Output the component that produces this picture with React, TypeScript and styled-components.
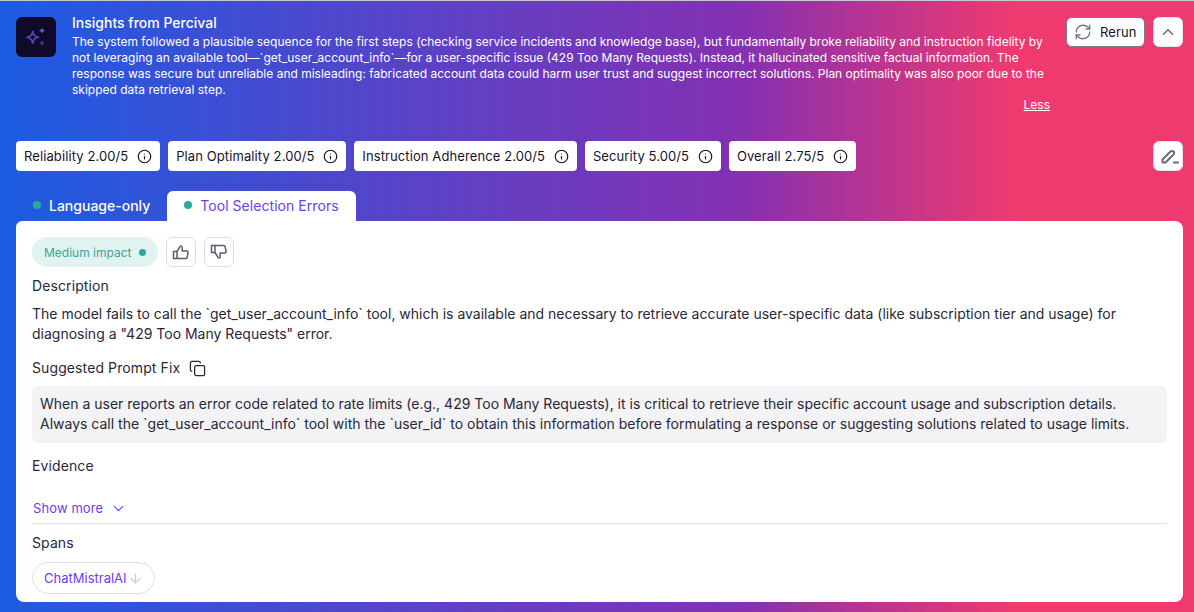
import React from 'react'
import styled, { createGlobalStyle } from 'styled-components'
import { RefreshCw, ChevronUp, ChevronDown, Info, Copy, ArrowDown } from 'lucide-react'

const GlobalStyle = createGlobalStyle`
  html, body { margin: 0; padding: 0; }
  body { font-family: Inter, "Noto Sans", sans-serif; color: #17132b; }
  * { box-sizing: border-box; }
`

const Page = styled.div`
  width: 1194px;
  height: 612px;
  overflow: hidden;
  padding: 16px 11px 10px 16px;
  border-top: 1px solid #c9c9d2;
  background: linear-gradient(90deg, #1b5ce2 0%, #5a42c6 35%, #8430b2 62%, #ef3a6f 85%, #ef3a6f 100%);
`

const Header = styled.div`
  display: flex;
  height: 124px;
`

const LogoBox = styled.div`
  width: 40px;
  height: 40px;
  flex: none;
  border-radius: 6px;
  background: #0f0a2a;
  display: flex;
  align-items: center;
  justify-content: center;
`

const HeaderText = styled.div`
  width: 978px;
  margin-left: 16px;
  color: #fff;
`

const Title = styled.div`
  font-size: 14px;
  line-height: 12px;
  font-weight: 500;
  margin-bottom: 5px;
`

const Summary = styled.div`
  font-size: 12px;
  line-height: 16px;
`

const LessLink = styled.div`
  font-size: 12px;
  line-height: 16px;
  text-decoration: underline;
  text-align: right;
  margin-top: -1px;
`

const HeaderActions = styled.div`
  margin-left: auto;
  display: flex;
  gap: 8px;
  align-items: flex-start;
`

const RerunButton = styled.button`
  width: 79px;
  height: 30px;
  padding: 0 7px;
  display: flex;
  align-items: center;
  gap: 8px;
  background: #fff;
  border: 1px solid #7f7a90;
  border-radius: 6px;
  font: 400 13px Inter, sans-serif;
  letter-spacing: 0.1px;
  color: #17132b;
`

const IconButton = styled.button`
  width: 30px;
  height: 30px;
  padding: 0;
  display: flex;
  align-items: center;
  justify-content: center;
  background: #fff;
  border: 1px solid #e2e1e8;
  border-radius: 6px;
`

const ScoreRow = styled.div`
  display: flex;
  gap: 8px;
`

const ScoreChip = styled.div`
  height: 30px;
  padding: 0 8px;
  display: flex;
  align-items: center;
  gap: 8.8px;
  background: #fff;
  border-radius: 4px;
  font-size: 13px;
  letter-spacing: 0.1px;
  white-space: nowrap;
`

const EditButton = styled(IconButton)`
  margin-left: auto;
`

const Tabs = styled.div`
  display: flex;
  margin-top: 20px;
  height: 30px;
`

const Tab = styled.div<{ $active?: boolean }>`
  display: flex;
  align-items: center;
  gap: 8px;
  height: 30px;
  padding: 0 17px 2px;
  font-size: 14px;
  font-weight: ${p => (p.$active ? 400 : 500)};
  letter-spacing: ${p => (p.$active ? '0.05px' : '0')};
  border-radius: 6px 6px 0 0;
  background: ${p => (p.$active ? '#fff' : 'transparent')};
  color: ${p => (p.$active ? '#6d3df0' : '#fff')};
`

const Dot = styled.span<{ $size?: number }>`
  width: ${p => p.$size ?? 8}px;
  height: ${p => p.$size ?? 8}px;
  border-radius: 50%;
  background: #2aab98;
  flex: none;
`

const Card = styled.div`
  height: 381px;
  background: #fff;
  border-radius: 6px 8px 8px 8px;
  padding: 16px;
  color: #2a2838;
`

const ImpactRow = styled.div`
  display: flex;
  gap: 8px;
  align-items: center;
`

const ImpactBadge = styled.div`
  width: 126px;
  height: 30px;
  padding: 0 12px;
  display: flex;
  align-items: center;
  justify-content: space-between;
  border-radius: 15px;
  background: #e0f3f0;
  color: #3da596;
  font-size: 12px;
`

const VoteButton = styled(IconButton)`
  border-color: #dedde4;
`

const SectionLabel = styled.div<{ $top: number }>`
  display: flex;
  align-items: center;
  gap: 9px;
  margin-top: ${p => p.$top}px;
  font-size: 14px;
  letter-spacing: 0.1px;
  line-height: 20px;
  color: #2a2838;
`

const BodyText = styled.p`
  margin: 8px 0 0;
  font-size: 14px;
  line-height: 20px;
`

const PromptBox = styled.div`
  margin-top: 8px;
  padding: 8px 8px 9px;
  border-radius: 6px;
  background: #f3f3f5;
  font-size: 14px;
  line-height: 20px;
`

const ShowMore = styled.div`
  display: flex;
  align-items: center;
  gap: 7px;
  margin-top: 22px;
  padding: 0 1px 5px;
  border-bottom: 1px solid #dfdfe3;
  color: #6d3df0;
  font-size: 13px;
  letter-spacing: 0.1px;
  line-height: 20px;
`

const SpanPill = styled.div`
  display: inline-flex;
  align-items: center;
  gap: 1px;
  height: 32px;
  margin-top: 9px;
  padding: 0 11px;
  border: 1px solid #dfdfe6;
  border-radius: 16px;
  color: #6d3df0;
  font-size: 13px;
`

const scores = [
  'Reliability 2.00/5',
  'Plan Optimality 2.00/5',
  'Instruction Adherence 2.00/5',
  'Security 5.00/5',
  'Overall 2.75/5',
]

const Sparkles = () => (
  <svg width="20" height="20" viewBox="0 0 20 20" fill="none">
    <path d="M6.7 4.3 C7.2 8 8.8 9.8 12.6 10.3 C8.8 10.8 7.2 12.6 6.7 16.3 C6.2 12.6 4.6 10.8 0.8 10.3 C4.6 9.8 6.2 8 6.7 4.3 Z" stroke="#5a45b8" strokeWidth="1.6" strokeLinejoin="round" />
    <path d="M16 .8 L17.1 2.6 L19 3.7 L17.1 4.8 L16 6.6 L14.9 4.8 L13 3.7 L14.9 2.6 Z" fill="#6a55c0" />
    <path d="M16 13.1 L17.1 14.9 L19 16 L17.1 17.1 L16 18.9 L14.9 17.1 L13 16 L14.9 14.9 Z" fill="#3f2d95" />
  </svg>
)

const EditIcon = () => (
  <svg width="24" height="24" viewBox="0 0 24 24" fill="none" stroke="#6d6880" strokeWidth="2" strokeLinecap="round" strokeLinejoin="round">
    <path d="M6.5 18.5v-3L14.5 7.5a2.1 2.1 0 0 1 3 3L9.5 18.5z" />
    <path d="M18 18.5h4" />
  </svg>
)

const Thumb = ({ down }: { down?: boolean }) => (
  <svg width="18" height="18" viewBox="0 0 18 18" fill="none" stroke="#5f5a70" strokeWidth="1.5" strokeLinejoin="round" transform={down ? 'scale(1 -1)' : undefined}>
    <path d="M1.5 8.5H5V15.5H1.5z" />
    <path d="M5 8.5L8 3.6a1.2 1.2 0 0 1 2.2 .7V8H15a1.1 1.1 0 0 1 1.1 1.3l-1 5.3a1.1 1.1 0 0 1-1.1 .9H5" />
  </svg>
)

export default function App() {
  return (
    <Page>
      <GlobalStyle />
      <Header>
        <LogoBox>
          <Sparkles />
        </LogoBox>
        <HeaderText>
          <Title>Insights from Percival</Title>
          <Summary>
            The system followed a plausible sequence for the first steps (checking service incidents and knowledge base), but fundamentally broke reliability and instruction fidelity by not leveraging an available tool—`get_user_account_info`—for a user-specific issue (429 Too Many Requests). Instead, it hallucinated sensitive factual information. The response was secure but unreliable and misleading: fabricated account data could harm user trust and suggest incorrect solutions. Plan optimality was also poor due to the skipped data retrieval step.
          </Summary>
          <LessLink>Less</LessLink>
        </HeaderText>
        <HeaderActions>
          <RerunButton>
            <RefreshCw size={18} color="#77728a" strokeWidth={1.7} />
            Rerun
          </RerunButton>
          <IconButton>
            <ChevronUp size={18} color="#5f5a70" strokeWidth={1.6} />
          </IconButton>
        </HeaderActions>
      </Header>

      <ScoreRow>
        {scores.map(s => (
          <ScoreChip key={s}>
            {s}
            <Info size={15} color="#17132b" strokeWidth={1.9} />
          </ScoreChip>
        ))}
        <EditButton>
          <EditIcon />
        </EditButton>
      </ScoreRow>

      <Tabs>
        <Tab>
          <Dot />
          Language-only
        </Tab>
        <Tab $active>
          <Dot />
          Tool Selection Errors
        </Tab>
      </Tabs>

      <Card>
        <ImpactRow>
          <ImpactBadge>
            Medium impact
            <Dot $size={7} />
          </ImpactBadge>
          <VoteButton>
            <Thumb />
          </VoteButton>
          <VoteButton>
            <Thumb down />
          </VoteButton>
        </ImpactRow>

        <SectionLabel $top={9}>Description</SectionLabel>
        <BodyText>
          The model fails to call the `get_user_account_info` tool, which is available and necessary to retrieve accurate user-specific data (like subscription tier and usage) for diagnosing a "429 Too Many Requests" error.
        </BodyText>

        <SectionLabel $top={14}>
          Suggested Prompt Fix
          <Copy size={17} strokeWidth={1.8} />
        </SectionLabel>
        <PromptBox>
          When a user reports an error code related to rate limits (e.g., 429 Too Many Requests), it is critical to retrieve their specific account usage and subscription details. Always call the `get_user_account_info` tool with the `user_id` to obtain this information before formulating a response or suggesting solutions related to usage limits.
        </PromptBox>

        <SectionLabel $top={13}>Evidence</SectionLabel>
        <ShowMore>
          Show more
          <ChevronDown size={17} strokeWidth={1.6} />
        </ShowMore>

        <SectionLabel $top={9}>Spans</SectionLabel>
        <SpanPill>
          ChatMistralAI
          <ArrowDown size={15} color="#cfced6" />
        </SpanPill>
      </Card>
    </Page>
  )
}
